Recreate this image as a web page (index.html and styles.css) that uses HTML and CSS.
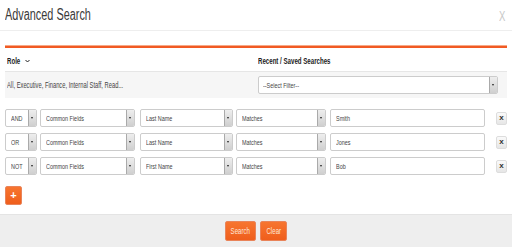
FILE: index.html
```html
<!DOCTYPE html>
<html>
<head>
  <title>Advanced Search</title>
  <link rel="stylesheet" href="styles.css">
</head>
<body>
  <div class="modal">
    <div class="modal-header">
      <h1><span class="t">Advanced Search</span></h1>
      <span class="close"><span class="t">X</span></span>
    </div>

    <div class="modal-body">
      <div class="rule"></div>

      <div class="labels">
        <div class="label">
          <span class="t">Role</span>
          <svg class="caret" width="5" height="4" viewBox="0 0 5 4"><path d="M0.5 1L2.5 3L4.5 1" fill="none" stroke="#222" stroke-width="1"/></svg>
        </div>
        <div class="label"><span class="t">Recent / Saved Searches</span></div>
      </div>

      <div class="filter-band">
        <div class="roles"><span class="t">All, Executive, Finance, Internal Staff, Read...</span></div>
        <div class="select select-filter">
          <span class="value"><span class="t">--Select Filter--</span></span>
          <span class="arrow"></span>
        </div>
      </div>

      <div class="rows">
        <div class="row">
          <div class="select op"><span class="value"><span class="t">AND</span></span><span class="arrow"></span></div>
          <div class="select group"><span class="value"><span class="t">Common Fields</span></span><span class="arrow"></span></div>
          <div class="select field"><span class="value"><span class="t">Last Name</span></span><span class="arrow"></span></div>
          <div class="select cond"><span class="value"><span class="t">Matches</span></span><span class="arrow"></span></div>
          <div class="input"><span class="t">Smith</span></div>
          <button class="remove">x</button>
        </div>
        <div class="row">
          <div class="select op"><span class="value"><span class="t">OR</span></span><span class="arrow"></span></div>
          <div class="select group"><span class="value"><span class="t">Common Fields</span></span><span class="arrow"></span></div>
          <div class="select field"><span class="value"><span class="t">Last Name</span></span><span class="arrow"></span></div>
          <div class="select cond"><span class="value"><span class="t">Matches</span></span><span class="arrow"></span></div>
          <div class="input"><span class="t">Jones</span></div>
          <button class="remove">x</button>
        </div>
        <div class="row">
          <div class="select op"><span class="value"><span class="t">NOT</span></span><span class="arrow"></span></div>
          <div class="select group"><span class="value"><span class="t">Common Fields</span></span><span class="arrow"></span></div>
          <div class="select field"><span class="value"><span class="t">First Name</span></span><span class="arrow"></span></div>
          <div class="select cond"><span class="value"><span class="t">Matches</span></span><span class="arrow"></span></div>
          <div class="input"><span class="t">Bob</span></div>
          <button class="remove">x</button>
        </div>
      </div>

      <button class="add">+</button>
    </div>

    <div class="modal-footer">
      <button class="btn btn-search"><span class="tc">Search</span></button>
      <button class="btn btn-clear"><span class="tc">Clear</span></button>
    </div>
  </div>
</body>
</html>
```

FILE: styles.css
```css
body {
  margin: 0;
  font-family: "Liberation Sans", Arial, sans-serif;
  color: #333;
  background: #fff;
}
/* the screenshot text is squeezed horizontally */
.t, .tc {
  display: inline-block;
  white-space: nowrap;
  transform: scaleX(0.68);
  transform-origin: left center;
}
.tc {
  transform-origin: center center;
}
.modal {
  width: 512px;
  height: 250px;
}
.modal-header {
  height: 30px;
  border-bottom: 1px solid #eee;
  display: flex;
  align-items: center;
  justify-content: space-between;
  padding: 0 5px;
}
.modal-header h1 {
  margin: 0;
  font-size: 16px;
  font-weight: normal;
  color: #3a3a3a;
  line-height: 20px;
}
.close {
  font-size: 14px;
  color: #c8c8c8;
  width: 8px;
  margin-top: 2px;
}
.modal-body {
  padding: 15px 5px 0;
}
.rule {
  height: 2px;
  background: #f15a24;
  border-top: 1px solid #f7a987;
  margin-top: -1px;
}
.labels {
  display: grid;
  grid-template-columns: 251px 1fr;
  height: 21px;
  align-items: center;
  padding-left: 2px;
  padding-top: 2px;
}
.label {
  font-size: 9px;
  font-weight: bold;
  color: #222;
  display: flex;
  align-items: center;
}
.caret {
  margin-left: -2px;
}
.filter-band {
  display: grid;
  grid-template-columns: 253px 240px;
  align-items: center;
  height: 26px;
  background: #f6f6f6;
  border-top: 1px solid #e6e6e6;
}
.roles {
  font-size: 8.5px;
  color: #444;
  padding-left: 2px;
}
.select, .input {
  height: 18px;
  box-sizing: border-box;
  border: 1px solid #ccc;
  border-radius: 2px;
  background: #fff;
  display: flex;
  align-items: center;
  font-size: 8px;
  color: #444;
  overflow: hidden;
}
.select .value {
  flex: 1;
  padding-left: 5px;
  white-space: nowrap;
  overflow: hidden;
}
.select .arrow {
  width: 7px;
  height: 16px;
  background: linear-gradient(#eee, #cfcfcf);
  border-left: 1px solid #aaa;
  position: relative;
}
.select .arrow::after {
  content: "";
  position: absolute;
  left: 2px;
  top: 7px;
  border-left: 1.5px solid transparent;
  border-right: 1.5px solid transparent;
  border-top: 2px solid #222;
}
.select-filter .value {
  padding-left: 4px;
}
.rows {
  margin-top: 11px;
  display: flex;
  flex-direction: column;
  gap: 6px;
}
.row {
  display: flex;
  align-items: center;
}
.op { width: 32px; }
.group { width: 96px; margin-left: 3px; }
.field { width: 94px; margin-left: 5px; }
.cond { width: 91px; margin-left: 3px; }
.input {
  width: 156px;
  margin-left: 4px;
  padding-left: 5px;
}
.remove {
  margin-left: 11px;
  width: 11px;
  height: 13px;
  padding: 0;
  border: 1px solid #ddd;
  border-radius: 2px;
  background: linear-gradient(#fafafa, #e6e6e6);
  font-family: "Liberation Sans", sans-serif;
  font-size: 8px;
  font-weight: bold;
  line-height: 10px;
  color: #333;
}
.add {
  margin-top: 11px;
  width: 17px;
  height: 19px;
  padding: 0;
  border: 1px solid #e9845a;
  border-radius: 2px;
  background: linear-gradient(#f7752f, #ef5e1c);
  color: #fff;
  font-family: "Liberation Sans", sans-serif;
  font-weight: bold;
  font-size: 11px;
  line-height: 15px;
  display: block;
}
.modal-footer {
  margin-top: 9px;
  height: 32px;
  background: #eee;
  border-top: 1px solid #e4e4e4;
  display: flex;
  justify-content: center;
  align-items: center;
  gap: 4px;
}
.btn {
  height: 20px;
  padding: 0;
  border: 1px solid #e9845a;
  border-radius: 2px;
  background: linear-gradient(#f7752f, #ef5e1c);
  color: #fde5d8;
  font-family: inherit;
  font-size: 9px;
  display: flex;
  justify-content: center;
  align-items: center;
  overflow: hidden;
}
.btn-search { width: 31px; }
.btn-clear { width: 27px; }
```
